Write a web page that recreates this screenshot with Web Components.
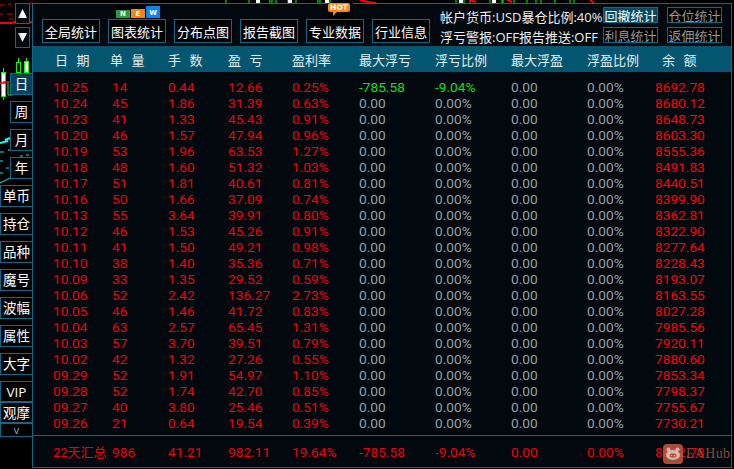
<!DOCTYPE html>
<html>
<head>
<meta charset="utf-8">
<title>统计</title>
<style>
  html, body { margin: 0; height: 100%; background: #000; overflow: hidden; }
  body { font-family: "Open Sans", "Noto Sans CJK SC", sans-serif; font-size: 13.3px; }
</style>
</head>
<body>
<stats-window></stats-window>

<script>
const LINE = '#0d6a8a';
const ROWS = [
  ['10.25', '14', '0.44', '12.66', '0.25%', '-785.58', '-9.04%', '0.00', '0.00%', '8692.78'],
  ['10.24', '45', '1.86', '31.39', '0.63%', '0.00', '0.00%', '0.00', '0.00%', '8680.12'],
  ['10.23', '41', '1.33', '45.43', '0.91%', '0.00', '0.00%', '0.00', '0.00%', '8648.73'],
  ['10.20', '46', '1.57', '47.94', '0.96%', '0.00', '0.00%', '0.00', '0.00%', '8603.30'],
  ['10.19', '53', '1.96', '63.53', '1.27%', '0.00', '0.00%', '0.00', '0.00%', '8555.36'],
  ['10.18', '48', '1.60', '51.32', '1.03%', '0.00', '0.00%', '0.00', '0.00%', '8491.83'],
  ['10.17', '51', '1.81', '40.61', '0.81%', '0.00', '0.00%', '0.00', '0.00%', '8440.51'],
  ['10.16', '50', '1.66', '37.09', '0.74%', '0.00', '0.00%', '0.00', '0.00%', '8399.90'],
  ['10.13', '55', '3.64', '39.91', '0.80%', '0.00', '0.00%', '0.00', '0.00%', '8362.81'],
  ['10.12', '46', '1.53', '45.26', '0.91%', '0.00', '0.00%', '0.00', '0.00%', '8322.90'],
  ['10.11', '41', '1.50', '49.21', '0.98%', '0.00', '0.00%', '0.00', '0.00%', '8277.64'],
  ['10.10', '38', '1.40', '35.36', '0.71%', '0.00', '0.00%', '0.00', '0.00%', '8228.43'],
  ['10.09', '33', '1.35', '29.52', '0.59%', '0.00', '0.00%', '0.00', '0.00%', '8193.07'],
  ['10.06', '52', '2.42', '136.27', '2.73%', '0.00', '0.00%', '0.00', '0.00%', '8163.55'],
  ['10.05', '46', '1.46', '41.72', '0.83%', '0.00', '0.00%', '0.00', '0.00%', '8027.28'],
  ['10.04', '63', '2.57', '65.45', '1.31%', '0.00', '0.00%', '0.00', '0.00%', '7985.56'],
  ['10.03', '57', '3.70', '39.51', '0.79%', '0.00', '0.00%', '0.00', '0.00%', '7920.11'],
  ['10.02', '42', '1.32', '27.26', '0.55%', '0.00', '0.00%', '0.00', '0.00%', '7880.60'],
  ['09.29', '52', '1.91', '54.97', '1.10%', '0.00', '0.00%', '0.00', '0.00%', '7853.34'],
  ['09.28', '52', '1.74', '42.70', '0.85%', '0.00', '0.00%', '0.00', '0.00%', '7798.37'],
  ['09.27', '40', '3.80', '25.46', '0.51%', '0.00', '0.00%', '0.00', '0.00%', '7755.67'],
  ['09.26', '21', '0.64', '19.54', '0.39%', '0.00', '0.00%', '0.00', '0.00%', '7730.21']
];
const GRID = 'display: grid; grid-template-columns: 59px 56px 60px 64px 67px 76px 76px 76px 68px 60px; padding-left: 20px;';
const NUM_FONT = 'font-family: Roboto, "Noto Sans CJK SC", sans-serif; font-size: 13.7px;';

class ChartBackdrop extends HTMLElement {
  connectedCallback() {
    // bits of the candle chart that stick out behind the window
    let candles = '';
    [[1, 72, 24, 68, 100], [16, 62, 10, 58, 72], [24, 61, 11, 58, 72]].forEach(c => {
      const fill = c[0] === 1 || c[0] === 24 ? '#fff' : '#000';
      candles += `<path d="M${c[0] + 2.5} ${c[3]}V${c[4]}" stroke="#0f0"/><rect x="${c[0] + .5}" y="${c[1] + .5}" width="4" height="${c[2]}" fill="${fill}" stroke="#0f0"/>`;
    });
    let top = '';
    [226, 249, 270, 272, 276, 288, 296, 318, 320, 327, 330, 456, 464, 470, 490, 493, 502, 503, 514, 527, 536, 541, 555, 570, 574].forEach(x => {
      top += `<path d="M${x} 0V3" stroke="#0f0"/>`;
    });
    [256, 288, 325, 459, 492].forEach(x => {
      top += `<rect x="${x}" y="0" width="4" height="3" fill="#fff"/>`;
    });
    this.attachShadow({ mode: 'open' }).innerHTML = `
      <style>
        :host { position: absolute; left: 0; top: 0; width: 734px; height: 469px; display: block; }
        svg { display: block; }
      </style>
      <svg width="734" height="469" fill="none">
        <path d="M0 5h5M8 4h3M16 4h4M0 14h3M7 14h6M17 13h3M9 19h5M19 17h6" stroke="#d00" stroke-width="1"/>
        <path d="M0 23h13M13 22h20" stroke="#f00" stroke-width="2"/>
        <path d="M30 3h3" stroke="#e00"/>
        ${candles}
        <path d="M8 82v13" stroke="#0f0"/><path d="M8 95h5" stroke="#0f0"/>
        <path d="M0 83h6M3 82h10" stroke="#f00" stroke-width="1.5"/>
        <path d="M0 143l8-2M5 140l5-2" stroke="#0ff" stroke-width="2"/>
        <path d="M0 152h4M8 150h4M0 161h3M0 173h3M6 168h3M0 183l10-5" stroke="#0ee"/>
        <path d="M20 156h3M26 155h3" stroke="#0ee"/>
        ${top}
        <path d="M360 0l8 2 8 1M470 0l6 2M507 0l5 2M590 0l4 3" stroke="#f00" stroke-width="2"/>
      </svg>`;
  }
}

class ArrowBtn extends HTMLElement {
  connectedCallback() {
    const up = this.hasAttribute('up');
    this.attachShadow({ mode: 'open' }).innerHTML = `
      <style>
        :host { display: flex; align-items: center; justify-content: center; box-sizing: border-box; width: 15px; height: 21px; border: 1px solid ${LINE}; background: #020a10; }
      </style>
      <svg width="11" height="11" viewBox="0 0 11 11">
        <defs><linearGradient id="g" x1="0" x2="1"><stop offset="0" stop-color="#9fc4d2"/><stop offset=".5" stop-color="#fff"/></linearGradient></defs>
        <path d="${up ? 'M5.5 1L10 10H1z' : 'M1 1H10L5.5 10z'}" fill="url(#g)"/>
      </svg>`;
  }
}

class RailBtn extends HTMLElement {
  connectedCallback() {
    this.attachShadow({ mode: 'open' }).innerHTML = `
      <style>
        :host { display: flex; align-items: center; justify-content: center; box-sizing: border-box; height: 22px; width: 32px; margin-bottom: 6px; border: 1px solid ${LINE}; border-right: 0; background: #000; color: #fff; font-size: 13.5px; line-height: 20px; white-space: nowrap; }
        :host([short]) { width: 22px; }
        :host([active]) { background: #07425c; }
        :host([tight]) { margin-bottom: 0; height: 21px; }
        :host([chevron]) { height: 14px; margin-bottom: 0; color: #7fb6cc; font-size: 11px; line-height: 12px; }
      </style>
      <slot></slot>`;
  }
}

class SideRail extends HTMLElement {
  connectedCallback() {
    this.attachShadow({ mode: 'open' }).innerHTML = `
      <style>
        :host { position: relative; display: flex; flex-direction: column; align-items: flex-end; box-sizing: border-box; width: 32px; padding-top: 3px; }
        .arrows { display: flex; flex-direction: column; gap: 3px; align-self: flex-end; margin: 0 2px 25px 0; }
      </style>
      <div class="arrows"><arrow-btn up></arrow-btn><arrow-btn></arrow-btn></div>
      <slot></slot>`;
  }
}

class ToolBtn extends HTMLElement {
  connectedCallback() {
    this.attachShadow({ mode: 'open' }).innerHTML = `
      <style>
        :host { display: flex; align-items: center; justify-content: center; box-sizing: border-box; width: 58px; height: 24px; border: 1px solid ${LINE}; background: #000; color: #fff; font-size: 13px; white-space: nowrap; }
      </style>
      <slot></slot>`;
  }
}

class MiniBtn extends HTMLElement {
  connectedCallback() {
    this.attachShadow({ mode: 'open' }).innerHTML = `
      <style>
        :host { display: flex; align-items: center; justify-content: center; box-sizing: border-box; width: 55px; height: 16px; border: 1px solid ${LINE}; background: #000; color: #999; font-size: 13px; white-space: nowrap; overflow: hidden; }
        :host([active]) { background: #054a64; color: #fff; }
      </style>
      <slot></slot>`;
  }
}

class NewBadge extends HTMLElement {
  connectedCallback() {
    this.attachShadow({ mode: 'open' }).innerHTML = `
      <style>
        :host { position: absolute; left: 83px; top: 2px; display: flex; align-items: flex-end; width: 44px; height: 12px; background: #000; font: bold 7px "DejaVu Sans", sans-serif; color: #fff; }
        span { display: flex; align-items: center; justify-content: center; width: 14px; }
        .n { background: #2d9a3c; height: 8px; width: 14px; }
        .e { background: #f08512; height: 9px; margin-left: 1px; }
        .w { background: #0a84f0; height: 12px; width: 14px; padding-top: 2px; box-sizing: border-box; margin-left: 1px; }
      </style>
      <span class="n">N</span><span class="e">E</span><span class="w">W</span>`;
  }
}

class HotBadge extends HTMLElement {
  connectedCallback() {
    this.attachShadow({ mode: 'open' }).innerHTML = `
      <style>
        :host { position: absolute; left: 295px; top: -1px; display: block; width: 25px; height: 15px; background: #000; }
        b { display: block; width: 22px; height: 9px; border-radius: 2px; background: #f58a14; color: #fff; font: bold 7.5px/9px "DejaVu Sans", sans-serif; text-align: center; }
        i { display: block; width: 0; height: 0; margin-left: 5px; border-top: 4px solid #f58a14; border-right: 4px solid transparent; }
      </style>
      <b>HOT</b><i></i>`;
  }
}

class TopBar extends HTMLElement {
  connectedCallback() {
    this.attachShadow({ mode: 'open' }).innerHTML = `
      <style>
        :host { position: relative; display: flex; flex: none; height: 42px; box-sizing: border-box; }
        .tools { display: flex; gap: 8px; padding: 15px 0 0 9px; }
        .info { margin: 3px 0 0 10px; color: #f0f0f0; font-size: 13px; line-height: 20px; white-space: nowrap; width: 163px; }
        .mini { display: grid; grid-template-columns: 55px 55px; gap: 4px 9px; margin-top: 3px; height: 36px; }
      </style>
      <div class="tools">
        <tool-btn>全局统计</tool-btn>
        <tool-btn>图表统计</tool-btn>
        <tool-btn>分布点图</tool-btn>
        <tool-btn>报告截图</tool-btn>
        <tool-btn>专业数据</tool-btn>
        <tool-btn>行业信息</tool-btn>
      </div>
      <div class="info">帐户货币:USD暴仓比例:40%<br>浮亏警报:OFF报告推送:OFF</div>
      <div class="mini">
        <mini-btn active>回撤统计</mini-btn>
        <mini-btn>仓位统计</mini-btn>
        <mini-btn>利息统计</mini-btn>
        <mini-btn>返佣统计</mini-btn>
      </div>
      <new-badge></new-badge>
      <hot-badge></hot-badge>`;
  }
}

class TableHead extends HTMLElement {
  connectedCallback() {
    this.attachShadow({ mode: 'open' }).innerHTML = `
      <style>
        :host { ${GRID} flex: none; height: 26px; align-items: center; background: #035570; color: #e8eef0; font-size: 13px; white-space: nowrap; }
        .sp { letter-spacing: 2.5px; }
        .a { margin-left: 2px; }
        .b { margin-left: -2px; }
        .c { margin-left: 7px; }
      </style>
      <span class="sp a">日 期</span><span class="sp b">单 量</span><span class="sp">手 数</span><span class="sp">盈 亏</span>
      <span>盈利率</span><span>最大浮亏</span><span>浮亏比例</span><span>最大浮盈</span><span>浮盈比例</span><span class="sp c">余 额</span>`;
  }
}

class TableRow extends HTMLElement {
  set cells(list) {
    const shadow = this.shadowRoot || this.attachShadow({ mode: 'open' });
    const hit = list[5] !== '0.00';
    const html = list.map((text, i) => {
      let tone = 'red';
      if (i === 5 || i === 6) tone = hit ? 'green' : 'gray';
      if (i === 7 || i === 8) tone = 'gray';
      return `<span class="${tone}">${text}</span>`;
    }).join('');
    shadow.innerHTML = `
      <style>
        :host { ${GRID} ${NUM_FONT} height: 16px; line-height: 16px; white-space: nowrap; }
        .red { color: #f0000f; }
        .gray { color: #93a2a8; }
        .green { color: #0ae01c; }
        span:last-child { color: #ff0000; }
      </style>
      ${html}`;
  }
}

class TableBody extends HTMLElement {
  connectedCallback() {
    this.attachShadow({ mode: 'open' }).innerHTML = `
      <style>
        :host { display: block; flex: 1; padding-top: 7px; }
      </style>`;
    ROWS.forEach(r => {
      const row = document.createElement('table-row');
      row.cells = r;
      this.shadowRoot.appendChild(row);
    });
  }
}

class TableFoot extends HTMLElement {
  connectedCallback() {
    this.attachShadow({ mode: 'open' }).innerHTML = `
      <style>
        :host { ${GRID} ${NUM_FONT} position: relative; flex: none; box-sizing: border-box; height: 32px; border-top: 1px solid ${LINE}; align-items: center; color: #f0000f; white-space: nowrap; }
        .cn { font-size: 13px; }
      </style>
      <span class="cn">22天汇总</span><span>986</span><span>41.21</span><span>982.11</span><span>19.64%</span>
      <span>-785.58</span><span>-9.04%</span><span>0.00</span><span>0.00%</span><span>8692.78</span>
      <water-mark></water-mark>`;
  }
}

class WaterMark extends HTMLElement {
  connectedCallback() {
    this.attachShadow({ mode: 'open' }).innerHTML = `
      <style>
        :host { position: absolute; left: 630px; top: 8px; display: flex; align-items: center; gap: 3px; padding: 0; }
        svg { display: block; }
        span { color: #8d4a3a; font: 14px "Liberation Serif", serif; letter-spacing: .3px; }
      </style>
      <svg width="20" height="20" viewBox="0 0 20 20" opacity=".85">
        <rect width="20" height="20" rx="4" fill="#c8583c"/>
        <circle cx="5.5" cy="5.5" r="2" fill="#f0d8d0"/><circle cx="14.5" cy="5.5" r="2" fill="#f0d8d0"/>
        <ellipse cx="10" cy="11" rx="7" ry="5" fill="#f0d8d0"/>
        <rect x="6.5" y="9.5" width="7" height="4" rx="2" fill="#c8583c"/>
        <circle cx="8.5" cy="11.5" r=".8" fill="#f0d8d0"/><circle cx="11.5" cy="11.5" r=".8" fill="#f0d8d0"/>
      </svg>
      <span>EAHub</span>`;
  }
}

class StatPanel extends HTMLElement {
  connectedCallback() {
    this.attachShadow({ mode: 'open' }).innerHTML = `
      <style>
        :host { position: relative; display: flex; flex-direction: column; box-sizing: border-box; width: 700px; height: 465px; margin-top: 3px; border: 1px solid ${LINE}; background: #01090e; }
      </style>
      <top-bar></top-bar>
      <table-head></table-head>
      <table-body></table-body>
      <table-foot></table-foot>`;
  }
}

class StatsWindow extends HTMLElement {
  connectedCallback() {
    this.attachShadow({ mode: 'open' }).innerHTML = `
      <style>
        :host { position: relative; display: flex; width: 734px; height: 469px; }
      </style>
      <chart-backdrop></chart-backdrop>
      <side-rail>
        <rail-btn short active>日</rail-btn>
        <rail-btn short>周</rail-btn>
        <rail-btn short>月</rail-btn>
        <rail-btn short>年</rail-btn>
        <rail-btn>单币</rail-btn>
        <rail-btn>持仓</rail-btn>
        <rail-btn>品种</rail-btn>
        <rail-btn>魔号</rail-btn>
        <rail-btn>波幅</rail-btn>
        <rail-btn>属性</rail-btn>
        <rail-btn>大字</rail-btn>
        <rail-btn tight>VIP</rail-btn>
        <rail-btn tight>观摩</rail-btn>
        <rail-btn chevron>v</rail-btn>
      </side-rail>
      <stat-panel></stat-panel>`;
  }
}

customElements.define('chart-backdrop', ChartBackdrop);
customElements.define('arrow-btn', ArrowBtn);
customElements.define('rail-btn', RailBtn);
customElements.define('side-rail', SideRail);
customElements.define('tool-btn', ToolBtn);
customElements.define('mini-btn', MiniBtn);
customElements.define('new-badge', NewBadge);
customElements.define('hot-badge', HotBadge);
customElements.define('top-bar', TopBar);
customElements.define('table-head', TableHead);
customElements.define('table-row', TableRow);
customElements.define('table-body', TableBody);
customElements.define('water-mark', WaterMark);
customElements.define('table-foot', TableFoot);
customElements.define('stat-panel', StatPanel);
customElements.define('stats-window', StatsWindow);
</script>
</body>
</html>
